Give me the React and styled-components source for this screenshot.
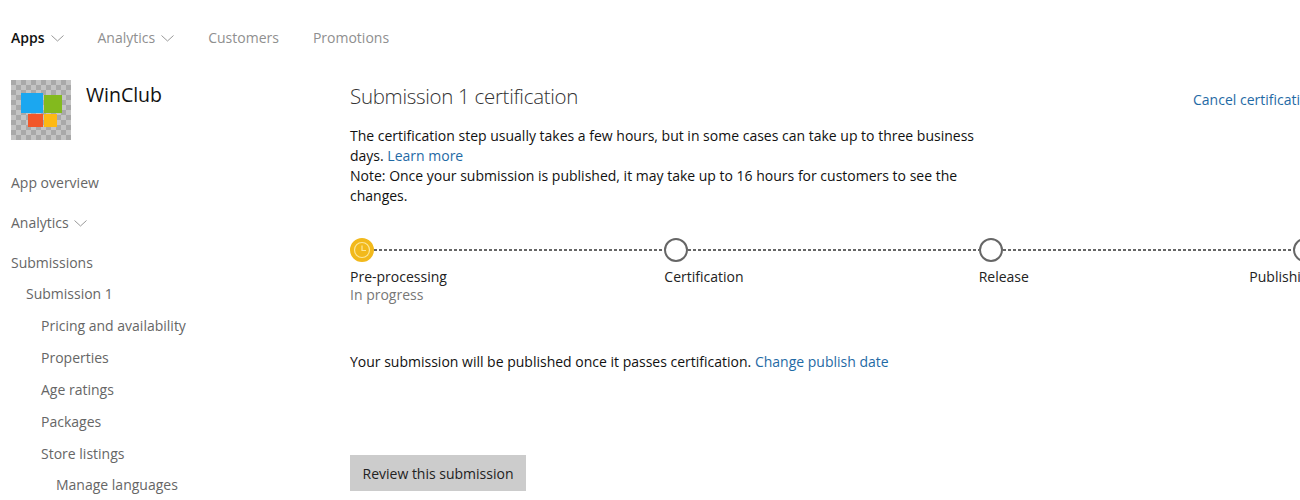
import React from "react";
import styled, { createGlobalStyle } from "styled-components";

const GlobalStyle = createGlobalStyle`
  html, body {
    margin: 0;
    padding: 0;
    height: 100%;
    overflow: hidden;
    background: #fff;
  }
  body {
    font-family: "Open Sans", "Noto Sans", sans-serif;
    font-size: 14px;
    color: #111;
  }
`;

const Page = styled.div`
  width: 1300px;
  height: 500px;
  overflow: hidden;
`;

const TopNav = styled.nav`
  display: flex;
  align-items: center;
  gap: 34px;
  height: 74px;
  padding-left: 11px;
`;

const NavItem = styled.a`
  display: flex;
  align-items: center;
  gap: 6px;
  color: ${(p) => (p.$active ? "#111" : "#8f8f8f")};
  font-weight: ${(p) => (p.$active ? 600 : 400)};
`;

const Columns = styled.div`
  display: flex;
  padding-top: 6px;
`;

const Sidebar = styled.aside`
  flex: 0 0 339px;
  padding-left: 11px;
`;

const AppHeader = styled.div`
  display: flex;
  gap: 15px;
  margin-bottom: 26px;
`;

const AppName = styled.div`
  font-size: 19.5px;
  line-height: 30px;
  color: #111;
`;

const SideItem = styled.div`
  display: flex;
  align-items: center;
  gap: 5px;
  height: ${(p) => (p.$level === 1 || p.$level === 3 ? 31 : 32)}px;
  margin-top: ${(p) => (p.$level === 0 ? 8 : 0)}px;
  padding-left: ${(p) => p.$level * 15}px;
  color: #666;
`;

const Main = styled.main`
  flex: 0 0 967px;
  min-width: 0;
`;

const TitleRow = styled.div`
  display: flex;
  justify-content: space-between;
  align-items: center;
  height: 32px;
  margin-bottom: 14px;
`;

const Title = styled.h1`
  margin: 0;
  font-size: 20.5px;
  font-weight: 300;
  letter-spacing: -0.3px;
  color: #333;
`;

const Link = styled.a`
  color: #1f6aa5;
`;

const CancelLink = styled(Link)`
  margin-top: 6px;
  white-space: nowrap;
`;

const Description = styled.p`
  margin: 0;
  width: 640px;
  line-height: 20px;
`;

const Steps = styled.div`
  display: flex;
  margin-top: 32px;
`;

const Step = styled.div`
  flex: 0 0 ${(p) => (p.$last ? "24px" : "314.33px")};
  min-width: 0;
  display: flex;
  flex-direction: column;
  align-items: ${(p) => (p.$last ? "flex-end" : "stretch")};
`;

const StepTrack = styled.div`
  display: flex;
  align-items: center;
  align-self: stretch;
  height: 24px;
  margin-bottom: 5px;
`;

const StepCircle = styled.div`
  flex: none;
  box-sizing: border-box;
  display: flex;
  align-items: center;
  justify-content: center;
  width: 24px;
  height: 24px;
  border-radius: 50%;
  border: 2.5px solid #666;
  background: #fff;
`;

const ActiveCircle = styled(StepCircle)`
  border-color: #f2b91c;
  background: #f2b91c;
`;

const Connector = styled.div`
  flex: 1;
  height: 2px;
  background: repeating-linear-gradient(to right, #666 0 3px, transparent 3px 5px);
`;

const StepName = styled.div`
  line-height: 19px;
  white-space: nowrap;
  color: #222;
`;

const StepStatus = styled.div`
  line-height: 18px;
  color: #777;
`;

const PublishNote = styled.p`
  margin: 48px 0 0;
  line-height: 20px;
`;

const ReviewButton = styled.button`
  display: block;
  margin-top: 83px;
  width: 176px;
  height: 36px;
  padding: 0;
  border: 0;
  background: #ccc;
  color: #222;
  font: inherit;
`;

const ChevronIcon = styled.svg`
  margin-top: 3px;
`;

const Chevron = () => (
  <ChevronIcon width="13" height="7" viewBox="0 0 13 7" fill="none" stroke="#999" strokeWidth="1">
    <path d="M0.5 0.5 L6.5 6 L12.5 0.5" />
  </ChevronIcon>
);

const ClockIcon = () => (
  <svg width="18" height="18" viewBox="0 0 18 18" fill="none" stroke="#fce79a" strokeWidth="1.2">
    <circle cx="9" cy="9" r="7.5" />
    <path d="M9 4.5 V9.5 H13" />
  </svg>
);

const AppLogo = () => (
  <svg width="60" height="60" viewBox="0 0 60 60">
    <defs>
      <pattern id="checker" width="10" height="10" patternUnits="userSpaceOnUse">
        <rect width="10" height="10" fill="#c4c4c4" />
        <rect width="5" height="5" fill="#a9a9a9" />
        <rect x="5" y="5" width="5" height="5" fill="#a9a9a9" />
      </pattern>
    </defs>
    <rect width="60" height="60" fill="url(#checker)" />
    <rect x="10" y="13" width="22" height="20" fill="#1ba7f0" />
    <rect x="33" y="15" width="18" height="18" fill="#83ba1e" />
    <rect x="17" y="34" width="15" height="13" fill="#f1572a" />
    <rect x="33" y="34" width="13" height="13" fill="#fdb913" />
  </svg>
);

const sideItems = [
  { label: "App overview", level: 0 },
  { label: "Analytics", level: 0, chevron: true },
  { label: "Submissions", level: 0 },
  { label: "Submission 1", level: 1 },
  { label: "Pricing and availability", level: 2 },
  { label: "Properties", level: 2 },
  { label: "Age ratings", level: 2 },
  { label: "Packages", level: 2 },
  { label: "Store listings", level: 2 },
  { label: "Manage languages", level: 3 },
];

const steps = [
  { name: "Pre-processing", status: "In progress", active: true },
  { name: "Certification" },
  { name: "Release" },
  { name: "Publishing", last: true },
];

export default function App() {
  return (
    <Page>
      <GlobalStyle />
      <TopNav>
        <NavItem $active>
          Apps <Chevron />
        </NavItem>
        <NavItem>
          Analytics <Chevron />
        </NavItem>
        <NavItem>Customers</NavItem>
        <NavItem>Promotions</NavItem>
      </TopNav>
      <Columns>
        <Sidebar>
          <AppHeader>
            <AppLogo />
            <AppName>WinClub</AppName>
          </AppHeader>
          {sideItems.map((item) => (
            <SideItem key={item.label} $level={item.level}>
              {item.label}
              {item.chevron && <Chevron />}
            </SideItem>
          ))}
        </Sidebar>
        <Main>
          <TitleRow>
            <Title>Submission 1 certification</Title>
            <CancelLink>Cancel certification</CancelLink>
          </TitleRow>
          <Description>
            The certification step usually takes a few hours, but in some cases can take up to three business
            days. <Link>Learn more</Link>
            <br />
            Note: Once your submission is published, it may take up to 16 hours for customers to see the changes.
          </Description>
          <Steps>
            {steps.map((step) => (
              <Step key={step.name} $last={step.last}>
                <StepTrack>
                  {step.active ? (
                    <ActiveCircle>
                      <ClockIcon />
                    </ActiveCircle>
                  ) : (
                    <StepCircle />
                  )}
                  {!step.last && <Connector />}
                </StepTrack>
                <StepName>{step.name}</StepName>
                {step.status && <StepStatus>{step.status}</StepStatus>}
              </Step>
            ))}
          </Steps>
          <PublishNote>
            Your submission will be published once it passes certification. <Link>Change publish date</Link>
          </PublishNote>
          <ReviewButton>Review this submission</ReviewButton>
        </Main>
      </Columns>
    </Page>
  );
}
